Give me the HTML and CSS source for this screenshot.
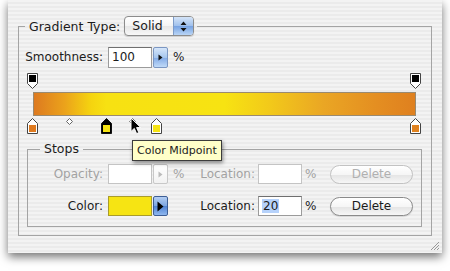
FILE: index.html
```html
<!DOCTYPE html>
<html lang="en">
<head>
  <meta charset="utf-8" />
  <title>Gradient Editor</title>
  <link rel="stylesheet" href="styles.css">
</head>
<body>
  <div class="window">

    <fieldset class="group">
      <legend class="group-title">
        <span class="title-label">Gradient Type:</span>
        <span class="popup">
          <span class="popup-value">Solid</span>
          <span class="popup-arrows">
            <svg width="7" height="11" viewBox="0 0 7 11"><path d="M3.5 0.5 L6.5 4 H0.5 Z M3.5 10.5 L6.5 7 H0.5 Z" fill="#111"/></svg>
          </span>
        </span>
      </legend>

      <div class="row smooth-row">
        <span class="row-label">Smoothness:</span>
        <span class="field">100</span><span class="step-btn"><svg width="5" height="7" viewBox="0 0 5 7"><path d="M0.5 0.5 L4.5 3.5 L0.5 6.5 Z" fill="#111"/></svg></span>
        <span class="unit">%</span>
      </div>

      <div class="ramp">
        <div class="ramp-top">
          <span class="marker" style="left: 0%">
            <svg width="11" height="16" viewBox="0 0 11 16"><path d="M0.5 0.5 H10.5 V10.5 L5.5 15.5 L0.5 10.5 Z" fill="#fff" stroke="#444"/><rect x="2" y="2" width="7" height="7" fill="#000"/></svg>
          </span>
          <span class="marker" style="left: 100%">
            <svg width="11" height="16" viewBox="0 0 11 16"><path d="M0.5 0.5 H10.5 V10.5 L5.5 15.5 L0.5 10.5 Z" fill="#fff" stroke="#444"/><rect x="2" y="2" width="7" height="7" fill="#000"/></svg>
          </span>
        </div>
        <div class="ramp-bar"></div>
        <div class="ramp-bottom">
          <span class="marker" style="left: 0%">
            <svg width="11" height="16" viewBox="0 0 11 16"><path d="M5.5 0.5 L10.5 5.5 V15.5 H0.5 V5.5 Z" fill="#fff" stroke="#444"/><rect x="2" y="7" width="7" height="7" fill="#df7a1f"/></svg>
          </span>
          <span class="diamond" style="left: 9.7%">
            <svg width="7" height="7" viewBox="0 0 7 7"><path d="M3.5 0.5 L6.5 3.5 L3.5 6.5 L0.5 3.5 Z" fill="#fff" stroke="#666"/></svg>
          </span>
          <span class="marker" style="left: 19.3%">
            <svg width="11" height="16" viewBox="0 0 11 16"><path d="M5.5 0.5 L10.5 5.5 V15.5 H0.5 V5.5 Z" fill="#000" stroke="#111"/><rect x="2" y="7" width="7" height="7" fill="#f6e413"/></svg>
          </span>
          <span class="diamond" style="left: 26%">
            <svg width="7" height="7" viewBox="0 0 7 7"><path d="M3.5 0.5 L6.5 3.5 L3.5 6.5 L0.5 3.5 Z" fill="#fff" stroke="#666"/></svg>
          </span>
          <span class="marker" style="left: 32.4%">
            <svg width="11" height="16" viewBox="0 0 11 16"><path d="M5.5 0.5 L10.5 5.5 V15.5 H0.5 V5.5 Z" fill="#fff" stroke="#444"/><rect x="2" y="7" width="7" height="7" fill="#f6e413"/></svg>
          </span>
          <span class="marker" style="left: 100%">
            <svg width="11" height="16" viewBox="0 0 11 16"><path d="M5.5 0.5 L10.5 5.5 V15.5 H0.5 V5.5 Z" fill="#fff" stroke="#444"/><rect x="2" y="7" width="7" height="7" fill="#e0821f"/></svg>
          </span>
          <span class="cursor">
            <svg width="12" height="18" viewBox="0 0 12 18"><path d="M1 1 L1 14.5 L4.3 11.4 L6.6 16.6 L8.8 15.6 L6.6 10.6 L10.8 10.6 Z" fill="#000" stroke="#fff" stroke-width="1"/></svg>
          </span>
        </div>
        <div class="tooltip">Color Midpoint</div>
      </div>

      <fieldset class="stops">
        <legend class="stops-title">Stops</legend>

        <div class="row stop-row is-disabled">
          <span class="row-label">Opacity:</span>
          <span class="field"></span><span class="step-btn"><svg width="5" height="7" viewBox="0 0 5 7"><path d="M0.5 0.5 L4.5 3.5 L0.5 6.5 Z" fill="#bbb"/></svg></span>
          <span class="unit">%</span>
          <span class="loc-label">Location:</span>
          <span class="field field-loc"></span>
          <span class="unit unit-loc">%</span>
          <span class="btn">Delete</span>
        </div>

        <div class="row stop-row">
          <span class="row-label">Color:</span>
          <span class="field swatch"></span><span class="step-btn step-btn-dark"><svg width="7" height="11" viewBox="0 0 7 11"><path d="M0.5 0.5 L6.5 5.5 L0.5 10.5 Z" fill="#000"/></svg></span>
          <span class="unit"></span>
          <span class="loc-label">Location:</span>
          <span class="field field-loc"><span class="selected">20</span></span>
          <span class="unit unit-loc">%</span>
          <span class="btn">Delete</span>
        </div>
      </fieldset>
    </fieldset>

    <div class="grip">
      <svg width="11" height="11" viewBox="0 0 11 11"><path d="M10 2 L2 10 M10 5 L5 10 M10 8 L8 10" stroke="#999" stroke-width="1"/></svg>
    </div>
  </div>
</body>
</html>
```

FILE: styles.css
```css
html, body { margin: 0; padding: 0; }
body { background: #fff; width: 450px; height: 271px; overflow: hidden; font-family: "DejaVu Sans", "Liberation Sans", sans-serif; font-size: 12px; color: #1c1c1c; }

.window { position: relative; box-sizing: border-box; margin-left: 8px; width: 434px; height: 253px; padding: 16px 10px 0; background: repeating-linear-gradient(#f3f3f3 0 2px, #ebebeb 2px 4px); box-shadow: 0 4px 9px rgba(0,0,0,.55); }

fieldset { margin: 0; padding: 0; min-width: 0; }
legend { padding: 0; }

.group { border: 1px solid #a4a4a4; }
.group-title { margin-left: 6px; padding: 0 3px 0 4px; display: flex; align-items: center; height: 20px; }
.title-label { margin-right: 4px; font-size: 12.5px; }

.popup { display: flex; width: 70px; height: 20px; box-sizing: border-box; border: 1px solid #8c8c8c; border-radius: 4px; overflow: hidden; background: linear-gradient(#fff, #f4f4f4 50%, #e6e6e6 51%, #f8f8f8); box-shadow: 0 1px 1px rgba(0,0,0,.15); }
.popup-value { flex: 1; padding-left: 7px; line-height: 18px; font-size: 12.5px; }
.popup-arrows { width: 19px; display: flex; align-items: center; justify-content: center; border-left: 1px solid #7d9bc8; background: linear-gradient(#d4e4f8, #9fc0ec 50%, #76a2e2 51%, #b9d5f6); }

.row { display: flex; align-items: center; }
.row-label { width: 84px; text-align: right; margin-right: 5px; }
.field { width: 44px; height: 20px; box-sizing: border-box; border: 1px solid #9b9b9b; border-top-color: #6f6f6f; background: #fff; padding-left: 3px; line-height: 19px; }
.step-btn { width: 15px; height: 20px; box-sizing: border-box; margin-left: 1px; border: 1px solid #7b96c2; border-radius: 2px; display: flex; align-items: center; justify-content: center; background: linear-gradient(#d6e6fa, #a6c6ee 50%, #82aae6 51%, #c0daf8); }
.unit { width: 14px; margin-left: 5px; }

.smooth-row { margin-top: 10px; height: 22px; }
.smooth-row .field, .smooth-row .step-btn { height: 21px; }

.ramp { position: relative; margin: 4px 0 0 14px; width: 383px; }
.ramp-top { position: relative; height: 20px; }
.ramp-bar { height: 24px; box-sizing: border-box; border: 1px solid #9a8a70; background: linear-gradient(to right, #dd7a20 0%, #eba21b 8%, #f5d40f 15%, #f7e112 19%, #f7e312 50%, #f2c91a 62%, #eaa624 76%, #e48e21 90%, #df801f 100%); }
.ramp-bottom { position: relative; height: 18px; }
.marker { position: absolute; top: 1px; margin-left: -6px; line-height: 0; }
.ramp-bottom .marker { top: 2px; }
.diamond { position: absolute; top: 2px; margin-left: -4px; line-height: 0; }
.cursor { position: absolute; left: 97px; top: 1px; line-height: 0; }

.tooltip { position: absolute; left: 99px; top: 68px; height: 19px; padding: 0 4px; font-size: 11px; line-height: 19px; background: #ffffc8; border: 1px solid #3c3c3c; box-shadow: 1px 2px 4px rgba(0,0,0,.45); white-space: nowrap; z-index: 2; }

.stops { margin: 7px 9px 8px 8px; border: 1px solid #a4a4a4; padding-bottom: 10px; }
.stops-title { margin-left: 12px; padding: 0 4px; font-size: 12.5px; line-height: 16px; }
.stops .row-label { width: 75px; }
.stop-row { margin-top: 7px; height: 20px; }
.stop-row + .stop-row { margin-top: 12px; }
.is-disabled { color: #a2a2a2; }
.is-disabled .field { border-color: #c4c4c4; }
.is-disabled .step-btn { border-color: #c8c8c8; background: linear-gradient(#fff, #f2f2f2); }
.loc-label { width: 68px; text-align: right; margin-right: 3px; }
.field-loc { width: 44px; }
.unit-loc { width: 10px; margin-left: 3px; }
.swatch { background: #f6e413; border-color: #a99c2a; }
.step-btn-dark { border-color: #3d5e95; background: linear-gradient(#b3cdf2, #7aa4e0 50%, #4e82d4 51%, #8fb7ee); }
.selected { background: #b6d2fb; padding: 0 1px; }

.btn { margin-left: 15px; width: 83px; height: 19px; box-sizing: border-box; border: 1px solid #8a8a8a; border-radius: 10px; text-align: center; line-height: 17px; background: linear-gradient(#fff, #f6f6f6 50%, #e4e4e4 51%, #f6f6f6); box-shadow: 0 1px 1px rgba(0,0,0,.12); }
.is-disabled .btn { border-color: #c2c2c2; color: #b0b0b0; box-shadow: none; }

.grip { position: absolute; right: 2px; bottom: 2px; line-height: 0; }
```
